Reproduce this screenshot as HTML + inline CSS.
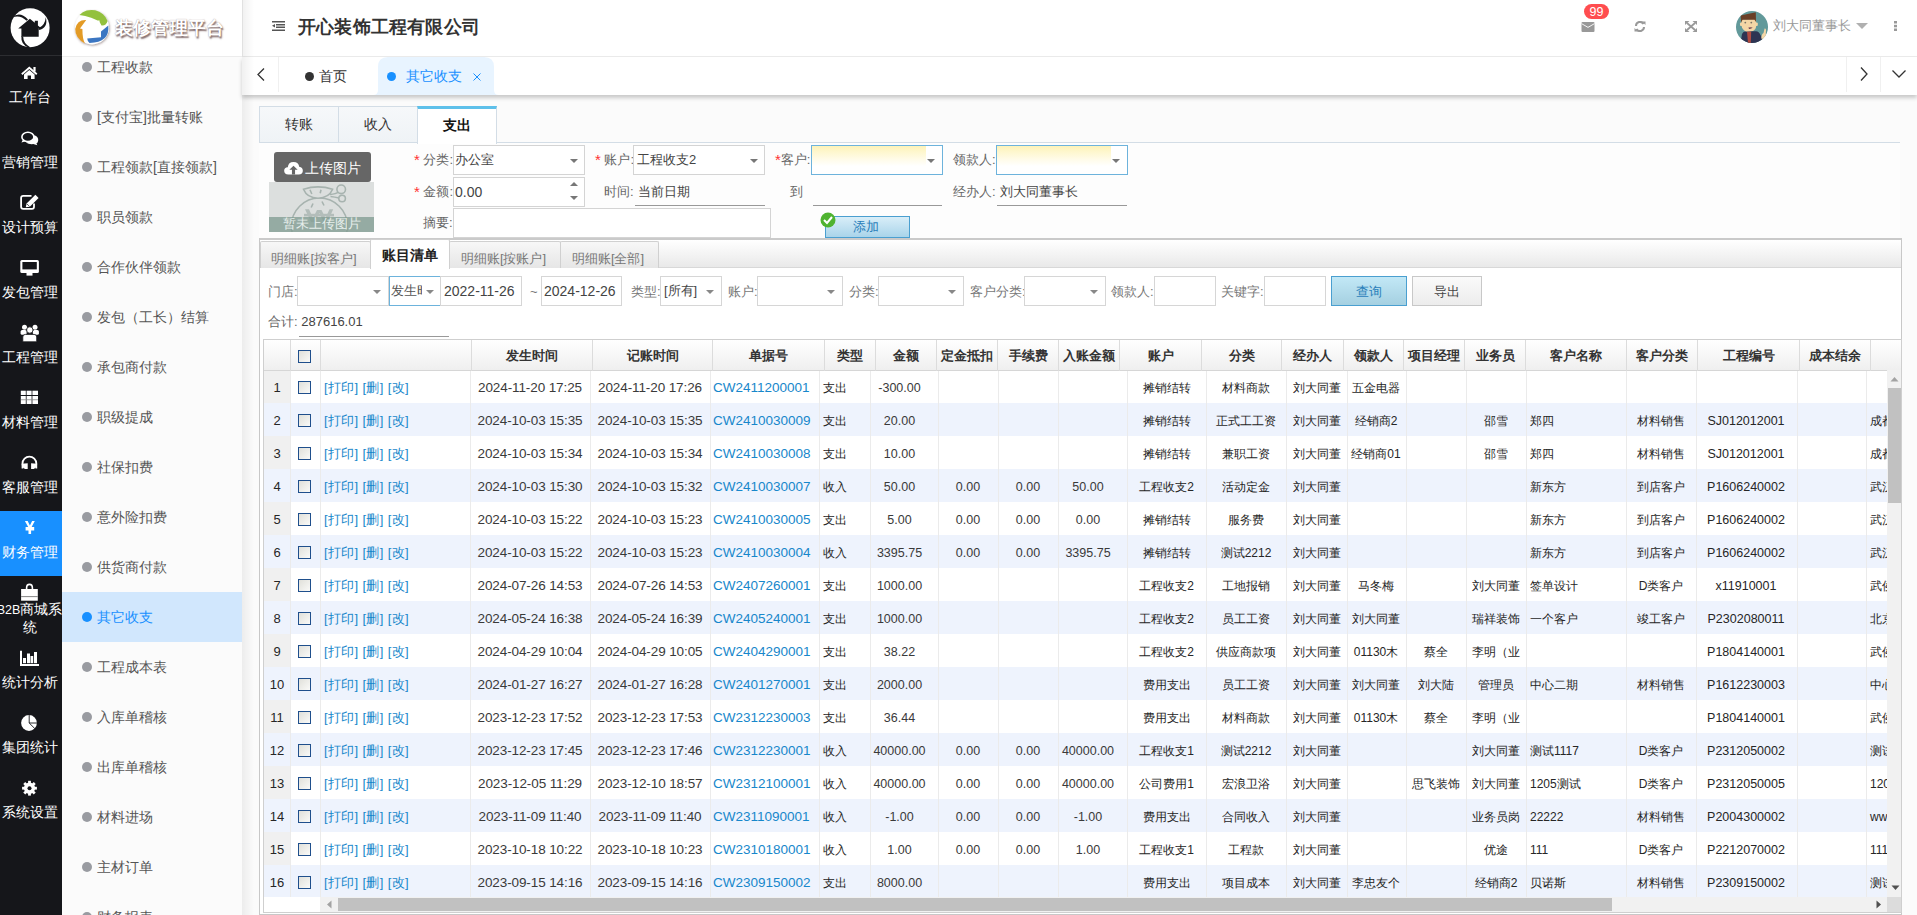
<!DOCTYPE html><html><head><meta charset="utf-8"><style>
*{box-sizing:border-box;margin:0;padding:0}
html,body{width:1917px;height:915px;overflow:hidden}
body{position:relative;font-family:"Liberation Sans",sans-serif;background:#fbfbfb;color:#333;font-size:14px}
.abs{position:absolute}
#nav{left:0;top:0;width:62px;height:915px;background:#15161a}
#nav .logo{left:0;top:0;width:62px;height:56px;border-bottom:1px solid #2c2d31}
#nav .it{left:0;width:62px;height:65px;color:#fff;text-align:center}
#nav .it.on{background:#1890ff}
#nav .it .ic{position:absolute;left:0;width:62px;top:8px;height:18px}
#nav .it .tx{position:absolute;left:-5px;width:69px;top:32px;font-size:14px;line-height:18px;white-space:nowrap;text-align:center}
#sub{left:62px;top:0;width:180px;height:915px;background:#fbfbfb;overflow:hidden}
#sub .list{position:absolute;left:0;top:56px;width:180px;height:859px;overflow:hidden}
#sub .si{position:absolute;left:0;width:180px;height:50px}
#sub .si.on{background:#d1e7fd}
#sub .si .dot{position:absolute;left:20px;top:20px;width:10px;height:10px;border-radius:50%;background:#999ba1}
#sub .si.on .dot{background:#1890ff}
#sub .si .t{position:absolute;left:35px;top:15px;font-size:14px;line-height:20px;color:#555;white-space:nowrap}
#sub .si.on .t{color:#1890ff}
#sublogo{left:62px;top:0;width:180px;height:57px;background:#fff;border-bottom:1px solid #ececec}
#header{left:242px;top:0;width:1675px;height:57px;background:#fff;border-bottom:1px solid #ececec;border-left:1px solid #eee}
#tabbar{left:242px;top:57px;width:1675px;height:38px;background:#fff;box-shadow:0 3px 4px rgba(0,0,0,.2)}
#mainshadow{left:242px;top:0;width:12px;height:915px;background:linear-gradient(to right,rgba(0,0,0,.06),rgba(0,0,0,0))}
.cjk{font-family:"Liberation Sans",sans-serif}
</style></head><body>
<div id="nav" class="abs">
<div class="logo abs"><svg width="62" height="56" viewBox="0 0 62 56"><circle cx="30.1" cy="27.7" r="19.5" fill="#fff"/><path d="M18.2 28.4 L29.9 18.8 L34.8 22.8 L34.8 20.8 L37.9 20.8 L37.9 25.4 L41.2 28.2 L38.7 28.2 L38.7 36.8 L21.4 36.8 L21.4 28.4Z" fill="#15161a"/><path d="M12 17.8 Q19.5 10.5 28 19.6 L26.6 20.8 Q19.5 14 12 17.8Z" fill="#15161a"/><path d="M45.8 17.2 Q48.5 28 38.7 30 L38.7 28 Q45 25.5 45.8 17.2Z" fill="#15161a"/><path d="M21.4 36 Q20.5 44.5 28.8 47.8 L30.5 47.4 Q23.2 43.5 23.2 36.8Z" fill="#15161a"/></svg></div>
<div class="it abs" style="top:56px"><svg width="62" height="34" viewBox="0 0 62 34" style="position:absolute;left:0;top:0"><path d="M21.2 17.4 L29.3 10.6 L37.4 17.4 L36.2 18.9 L29.3 13.1 L22.4 18.9Z" fill="#fff"/><rect x="33.4" y="11" width="2.2" height="4.6" fill="#fff"/><path d="M24 18.4 L29.3 13.9 L34.6 18.4 L34.6 23.1 L31 23.1 L31 19.6 L27.6 19.6 L27.6 23.1 L24 23.1Z" fill="#fff"/></svg><div class="tx">工作台</div></div>
<div class="it abs" style="top:121px"><svg width="62" height="34" viewBox="0 0 62 34" style="position:absolute;left:0;top:0"><path d="M34.2 14.2 Q38.6 15.6 38.2 19.4 Q37.9 21.8 36.4 22.6 L37.4 24.2 L33.2 23.1 Q29 23.6 25.8 21.4 Q33.4 21 34.2 14.2Z" fill="#fff"/><ellipse cx="27.9" cy="15.9" rx="6" ry="4.6" fill="#15161a" stroke="#fff" stroke-width="1.6"/><path d="M23 18.6 L21.4 21.6 L26 20.2Z" fill="#fff"/></svg><div class="tx">营销管理</div></div>
<div class="it abs" style="top:186px"><svg width="62" height="34" viewBox="0 0 62 34" style="position:absolute;left:0;top:0"><path d="M31.5 9.9 H23.2 Q21.1 9.9 21.1 12 V20.8 Q21.1 22.9 23.2 22.9 H32 Q34 22.9 34 20.8 V17.5" fill="none" stroke="#fff" stroke-width="1.8"/><path d="M25.8 21.2 L26.6 17.6 L35.4 8.8 L38.6 12 L29.8 20.8 Z" fill="#fff"/><path d="M26.9 17.9 L29.6 20.5" stroke="#15161a" stroke-width="0.7"/></svg><div class="tx">设计预算</div></div>
<div class="it abs" style="top:251px"><svg width="62" height="34" viewBox="0 0 62 34" style="position:absolute;left:0;top:0"><rect x="20.3" y="8.9" width="18.6" height="13.1" rx="1.5" fill="#fff"/><rect x="22.4" y="11" width="14.4" height="7.4" fill="#15161a"/><rect x="26.5" y="22" width="6" height="2.6" fill="#fff"/></svg><div class="tx">发包管理</div></div>
<div class="it abs" style="top:316px"><svg width="62" height="34" viewBox="0 0 62 34" style="position:absolute;left:0;top:0"><circle cx="24.5" cy="11.2" r="2.5" fill="#fff"/><circle cx="35" cy="11.2" r="2.5" fill="#fff"/><rect x="20.6" y="14" width="6" height="4.8" rx="1.5" fill="#fff"/><rect x="32.9" y="14" width="6" height="4.8" rx="1.5" fill="#fff"/><path d="M22.8 25.8 V21 Q22.8 18.4 25.4 18.4 H34.1 Q36.7 18.4 36.7 21 V25.8Z" fill="#fff" stroke="#15161a" stroke-width="0.8"/><circle cx="29.8" cy="14" r="3.2" fill="#fff" stroke="#15161a" stroke-width="0.8"/></svg><div class="tx">工程管理</div></div>
<div class="it abs" style="top:381px"><svg width="62" height="34" viewBox="0 0 62 34" style="position:absolute;left:0;top:0"><g fill="#fff"><rect x="20.8" y="9.7" width="5" height="4.3"/><rect x="26.6" y="9.7" width="5" height="4.3"/><rect x="32.4" y="9.7" width="5.6" height="4.3"/><rect x="20.8" y="15" width="5" height="8"/><rect x="26.6" y="15" width="5" height="8"/><rect x="32.4" y="15" width="5.6" height="8"/></g><rect x="20.8" y="18.4" width="17.2" height="0.8" fill="#888"/></svg><div class="tx">材料管理</div></div>
<div class="it abs" style="top:446px"><svg width="62" height="34" viewBox="0 0 62 34" style="position:absolute;left:0;top:0"><path d="M22.5 22.5 V17.5 A6.9 6.9 0 0 1 36.3 17.5 V22.5" fill="none" stroke="#fff" stroke-width="1.8"/><path d="M27.7 17.2 L27.7 23.1 L25 23.1 Q21.8 21.5 21.6 17.8Z M31.1 17.2 L31.1 23.1 L33.8 23.1 Q37 21.5 37.2 17.8Z" fill="#fff"/></svg><div class="tx">客服管理</div></div>
<div class="it abs on" style="top:511px"><svg width="62" height="34" viewBox="0 0 62 34" style="position:absolute;left:0;top:0"><path d="M24.9 9.9 L27.7 9.9 L29.9 14.6 L32.1 9.9 L34.8 9.9 L31.6 15.9 L34.2 15.9 L34.2 19.5 L31.1 19.5 L31.1 22.9 L28.5 22.9 L28.5 19.5 L25.6 19.5 L25.6 15.9 L28.2 15.9 Z" fill="#fff"/></svg><div class="tx">财务管理</div></div>
<div class="it abs" style="top:576px"><svg width="62" height="34" viewBox="0 0 62 34" style="position:absolute;left:0;top:0"><rect x="21.1" y="13" width="16.7" height="11.7" fill="#fff"/><rect x="21.1" y="20.2" width="16.7" height="0.9" fill="#777"/><path d="M26.6 13.6 V12 Q26.6 8.4 29.5 8.4 Q32.4 8.4 32.4 12 V13.6" fill="none" stroke="#fff" stroke-width="1.6"/></svg><div class="tx" style="top:25px;line-height:17px"><span style="font-size:12.5px">B2B</span>商城系<br>统</div></div>
<div class="it abs" style="top:641px"><svg width="62" height="34" viewBox="0 0 62 34" style="position:absolute;left:0;top:0"><path d="M21 9.7 V23.9 H39" fill="none" stroke="#fff" stroke-width="2"/><g fill="#fff"><rect x="23" y="17" width="3" height="5.2"/><rect x="27" y="12.5" width="3" height="9.7"/><rect x="30.5" y="15" width="2.7" height="7.2"/><rect x="34" y="11" width="3" height="11.2"/></g></svg><div class="tx">统计分析</div></div>
<div class="it abs" style="top:706px"><svg width="62" height="34" viewBox="0 0 62 34" style="position:absolute;left:0;top:0"><circle cx="29" cy="17" r="7.9" fill="#fff"/><path d="M29.2 8.5 V17 H37.4 M29.2 17 L35 22.8" fill="none" stroke="#15161a" stroke-width="0.9"/></svg><div class="tx">集团统计</div></div>
<div class="it abs" style="top:771px"><svg width="62" height="34" viewBox="0 0 62 34" style="position:absolute;left:0;top:0"><g transform="translate(29.5,17.2)" fill="#fff"><circle r="5.6"/><g><rect x="-1.4" y="-7.4" width="2.8" height="14.8"/><rect x="-1.4" y="-7.4" width="2.8" height="14.8" transform="rotate(45)"/><rect x="-1.4" y="-7.4" width="2.8" height="14.8" transform="rotate(90)"/><rect x="-1.4" y="-7.4" width="2.8" height="14.8" transform="rotate(135)"/></g><circle r="2" fill="#15161a"/></g></svg><div class="tx">系统设置</div></div>
</div>
<div id="sub" class="abs"><div class="list">
<div class="si" style="top:-14px"><div class="dot"></div><div class="t">工程收款</div></div>
<div class="si" style="top:36px"><div class="dot"></div><div class="t">[支付宝]批量转账</div></div>
<div class="si" style="top:86px"><div class="dot"></div><div class="t">工程领款[直接领款]</div></div>
<div class="si" style="top:136px"><div class="dot"></div><div class="t">职员领款</div></div>
<div class="si" style="top:186px"><div class="dot"></div><div class="t">合作伙伴领款</div></div>
<div class="si" style="top:236px"><div class="dot"></div><div class="t">发包（工长）结算</div></div>
<div class="si" style="top:286px"><div class="dot"></div><div class="t">承包商付款</div></div>
<div class="si" style="top:336px"><div class="dot"></div><div class="t">职级提成</div></div>
<div class="si" style="top:386px"><div class="dot"></div><div class="t">社保扣费</div></div>
<div class="si" style="top:436px"><div class="dot"></div><div class="t">意外险扣费</div></div>
<div class="si" style="top:486px"><div class="dot"></div><div class="t">供货商付款</div></div>
<div class="si on" style="top:536px"><div class="dot"></div><div class="t">其它收支</div></div>
<div class="si" style="top:586px"><div class="dot"></div><div class="t">工程成本表</div></div>
<div class="si" style="top:636px"><div class="dot"></div><div class="t">入库单稽核</div></div>
<div class="si" style="top:686px"><div class="dot"></div><div class="t">出库单稽核</div></div>
<div class="si" style="top:736px"><div class="dot"></div><div class="t">材料进场</div></div>
<div class="si" style="top:786px"><div class="dot"></div><div class="t">主材订单</div></div>
<div class="si" style="top:836px"><div class="dot"></div><div class="t">财务报表</div></div>
</div></div>
<div id="sublogo" class="abs"><svg class="abs" style="left:8px;top:5px" width="45" height="45" viewBox="0 0 45 45" style="overflow:visible"><defs><filter id="sh" x="-20%" y="-20%" width="140%" height="140%"><feDropShadow dx="0.6" dy="1" stdDeviation="0.9" flood-color="#5a4040" flood-opacity="0.55"/></filter></defs><g filter="url(#sh)"><circle cx="22" cy="22.4" r="17" fill="#fff"/><path d="M9.5 10 A17 17 0 0 1 37.6 16 Q36 21 31.5 20.5 L29.6 17 L29.6 15.4 L27.6 15.4 L21.2 12.8 Q15 10.5 9.5 10Z" fill="#93c13e"/><path d="M16.2 15 Q7 14.5 5.2 24 Q5 33 15 38.6 Q12.4 34 12.4 24 L10 23.4 Z" fill="#e39b27"/><path d="M38.3 20.5 Q40 37.5 19.5 38 Q17.6 37 17.2 33.4 L31 32.2 L31 26.6 Z" fill="#3b76c2"/></g></svg><div class="abs" style="left:53px;top:17px;font-size:18px;line-height:22px;font-weight:bold;color:#fff;letter-spacing:0.2px;text-shadow:1px 1.5px 1.5px rgba(90,60,60,.75),0 0 1px rgba(90,60,60,.6);white-space:nowrap">装修管理平台</div></div>
<div id="header" class="abs">
<svg class="abs" style="left:29px;top:21px" width="13" height="10" viewBox="0 0 13 10"><g fill="#555"><rect x="0" y="0" width="13" height="1.5"/><rect x="4" y="3" width="9" height="1.5"/><rect x="4" y="5.5" width="9" height="1.5"/><rect x="0" y="8.5" width="13" height="1.5"/><path d="M0 4.7 L3 3 L3 6.5Z"/></g></svg>
<div class="abs" style="left:55px;top:16px;font-size:18px;line-height:22px;font-weight:bold;color:#333;letter-spacing:0.2px;white-space:nowrap">开心装饰工程有限公司</div>
<svg class="abs" style="left:1338px;top:22px" width="14" height="10" viewBox="0 0 14 10"><rect x="0.5" y="0" width="13" height="10" rx="1" fill="#999"/><path d="M0.5 1.6 L7 5.4 L13.5 1.6" fill="none" stroke="#fff" stroke-width="0.9"/></svg>
<div class="abs" style="left:1341px;top:4px;width:25px;height:15px;border-radius:8px;background:#ff4d4f;color:#fff;font-size:12.5px;line-height:16px;text-align:center">99</div>
<svg class="abs" style="left:1391px;top:21px" width="12" height="11" viewBox="0 0 12 11"><path d="M2 5 A4 4 0 0 1 9.5 3" fill="none" stroke="#999" stroke-width="2"/><path d="M8 0.5 L11.5 0.5 L11.5 4 Z" fill="#999"/><path d="M10 6 A4 4 0 0 1 2.5 8" fill="none" stroke="#999" stroke-width="2"/><path d="M4 10.5 L0.5 10.5 L0.5 7Z" fill="#999"/></svg>
<svg class="abs" style="left:1442px;top:21px" width="12" height="11" viewBox="0 0 12 11"><path d="M2 2 L10 9 M10 2 L2 9" stroke="#999" stroke-width="1.8"/><path d="M0 0 H4.5 L0 4Z M12 0 H7.5 L12 4Z M0 11 H4.5 L0 7Z M12 11 H7.5 L12 7Z" fill="#999"/></svg>
<svg class="abs" style="left:1493px;top:11px" width="32" height="32" viewBox="0 0 32 32"><defs><clipPath id="av"><circle cx="16" cy="16" r="16"/></clipPath></defs><g clip-path="url(#av)"><rect width="32" height="32" fill="#62999a"/><path d="M4.5 32 L6 23 Q7 20.5 10 20.3 L20 20.3 Q23 20.5 24.5 24 L26.5 27.5 L28 32Z" fill="#2e3452"/><path d="M11 20.4 L15.2 20.4 L14.8 32 L12 32Z" fill="#b14b40"/><path d="M5.3 8.5 L20 8 L20.3 14.5 Q20 18.5 17 20 L10 20.5 Q6 18.5 5.5 14.5Z" fill="#f5d6a6"/><rect x="4" y="11.5" width="2.5" height="3.5" rx="1" fill="#f5d6a6"/><rect x="19.5" y="11.5" width="2.3" height="3.5" rx="1" fill="#f5d6a6"/><path d="M4.6 4.4 L19.8 1.2 L20 11 L18.5 8.7 L6.5 8.8 L5.2 11.5Z" fill="#6a3f27"/><circle cx="9.3" cy="11.6" r="0.9" fill="#7b7466"/><circle cx="15.3" cy="11.6" r="0.9" fill="#7b7466"/><path d="M12.4 16.5 Q14.5 15.8 16.6 16.6 Q15.5 18.2 13 18Z" fill="#7a4b58"/><path d="M25.2 27.5 Q25.5 23 27.5 22 L28.6 17.5 Q30 17 30 19 L29.8 23 Q31 25.5 29 28.5Z" fill="#f5d6a6"/></g></svg>
<div class="abs" style="left:1530px;top:17px;font-size:13px;line-height:18px;color:#999;white-space:nowrap">刘大同董事长</div>
<svg class="abs" style="left:1613px;top:23px" width="12" height="6" viewBox="0 0 12 6"><path d="M0 0 H12 L6 6Z" fill="#b0b0b0"/></svg>
<svg class="abs" style="left:1651px;top:21px" width="3" height="10" viewBox="0 0 3 10"><g fill="#999"><rect y="0" width="3" height="2.5"/><rect y="3.8" width="3" height="2.5"/><rect y="7.5" width="3" height="2.5"/></g></svg>
</div>
<div id="tabbar" class="abs">
<div class="abs" style="left:0;top:0;width:37px;height:35px;border-right:1px solid #f0f0f0"></div>
<svg class="abs" style="left:15px;top:11px" width="8" height="13" viewBox="0 0 8 13"><path d="M7 0.5 L1 6.5 L7 12.5" fill="none" stroke="#333" stroke-width="1.3"/></svg>
<div class="abs" style="left:63px;top:15px;width:9px;height:9px;border-radius:50%;background:#333"></div>
<div class="abs" style="left:77px;top:9px;font-size:14px;line-height:20px;color:#333;white-space:nowrap">首页</div>
<svg class="abs" style="left:131px;top:0px" width="126" height="38" viewBox="0 0 126 38"><path d="M0 38 Q5 38 5 33 L5 10 Q5 0 15 0 L111 0 Q121 0 121 10 L121 33 Q121 38 126 38Z" fill="#e8f4ff"/></svg>
<div class="abs" style="left:145px;top:15px;width:9px;height:9px;border-radius:50%;background:#1890ff"></div>
<div class="abs" style="left:164px;top:9px;font-size:14px;line-height:20px;color:#1890ff;white-space:nowrap">其它收支</div>
<svg class="abs" style="left:231px;top:16px" width="8" height="8" viewBox="0 0 8 8"><path d="M0.5 0.5 L7.5 7.5 M7.5 0.5 L0.5 7.5" stroke="#1890ff" stroke-width="1"/></svg>
<div class="abs" style="left:1604px;top:0;width:1px;height:35px;background:#f0f0f0"></div>
<div class="abs" style="left:1638px;top:0;width:1px;height:35px;background:#f0f0f0"></div>
<svg class="abs" style="left:1618px;top:10px" width="8" height="14" viewBox="0 0 8 14"><path d="M1 0.5 L7 7 L1 13.5" fill="none" stroke="#333" stroke-width="1.3"/></svg>
<svg class="abs" style="left:1650px;top:13px" width="14" height="8" viewBox="0 0 14 8"><path d="M0.5 0.5 L7 7 L13.5 0.5" fill="none" stroke="#333" stroke-width="1.3"/></svg>
</div>
<div id="mainshadow" class="abs"></div>
<style>
.t1{position:absolute;top:106px;height:36px;background:linear-gradient(#f6f8fa,#eff3f6);border:1px solid #d3dde6;border-bottom:none;font-size:14px;line-height:35px;text-align:center;color:#333}
.t1.on{background:#fff;border-top:3px solid #5ec0ea;line-height:33px;font-weight:bold;color:#111;height:38px}
.lbl{position:absolute;font-size:13px;line-height:18px;color:#666;white-space:nowrap}
.red{color:#f33;font-size:15px;line-height:1px;position:relative;top:1px}
.inp{position:absolute;background:#fff;border:1px solid #d4d4d4}
.car{position:absolute;width:0;height:0;border-left:4px solid transparent;border-right:4px solid transparent;border-top:4px solid #777;margin-left:1px;margin-top:1px}
.uline{position:absolute;height:1px;background:#999}
.val{position:absolute;font-size:13px;line-height:18px;color:#444;white-space:nowrap}
.t2{position:absolute;top:241px;height:27px;background:linear-gradient(#f7f7f7,#e6e6e6);border:1px solid #d0d0d0;border-bottom:none;border-radius:2px 2px 0 0;font-size:13px;line-height:34px;text-align:center;color:#777;white-space:nowrap;padding-right:3px}
.t2.on{top:239px;height:30px;background:#fff;color:#222;font-size:14px;line-height:30px;font-weight:bold;padding-right:0}
.fl{position:absolute;top:284px;font-size:13px;line-height:16px;color:#777;white-space:nowrap}
.fi{position:absolute;top:276px;height:30px;background:#fff;border:1px solid #d6d6d6}
.fv{position:absolute;font-size:14px;line-height:18px;color:#444;white-space:nowrap}
.btn{position:absolute;top:276px;height:30px;border:1px solid #c8c8c8;background:linear-gradient(#fafafa,#ececec);font-size:13px;line-height:30px;text-align:center;color:#444}
</style>
<div class="abs" style="left:259px;top:142px;width:1641px;height:1px;background:#d3dde6"></div>
<div class="abs" style="left:259px;top:143px;width:1641px;height:95px;background:#fdfdfd"></div>
<div class="t1" style="left:259px;width:80px">转账</div>
<div class="t1" style="left:338px;width:80px">收入</div>
<div class="t1 on" style="left:417px;width:80px">支出</div>
<div class="abs" style="left:274px;top:152px;width:97px;height:30px;background:#666;border-radius:3px"></div>
<svg class="abs" style="left:284px;top:160.5px" width="19" height="14" viewBox="0 0 18 13.5"><path d="M4 13 Q0 13 0 9.5 Q0 6 3.5 6 Q4 1 9 1 Q14 1 14.5 5.5 Q18 6 18 9.5 Q18 13 14 13Z" fill="#fff"/><path d="M9 4.5 L13 8.5 L10.5 8.5 L10.5 13 L7.5 13 L7.5 8.5 L5 8.5Z" fill="#666"/></svg>
<div class="abs" style="left:305px;top:158px;font-size:14px;line-height:20px;color:#fff;white-space:nowrap">上传图片</div>
<div class="abs" style="left:269px;top:182px;width:105px;height:50px;background:#dcdfde;overflow:hidden"><svg class="abs" style="left:0;top:0" width="105" height="50" viewBox="0 0 105 50"><g fill="none" stroke="#a7b3af" stroke-width="1.6"><circle cx="50.4" cy="44" r="28"/><path d="M34.5 7.3 Q49 2.5 63.6 7.3 Q60 16 49 16.2 Q38 16 34.5 7.3Z" fill="#dcdfde"/><path d="M41 7.8 L42.8 12 M52 7.8 L51.2 11.2 M44 21.5 L42.2 25.5 M53 19.5 L55 23.5"/><circle cx="72.2" cy="7.3" r="4.3"/><circle cx="73.1" cy="16.5" r="3.3"/><path d="M61 12.5 Q67 12 69.5 10 M61.5 14.5 Q66 15 69.8 16"/></g><path d="M36 27.2 L40 27.2 L44 36 L48 28 L52.5 28 L56.5 36 L60.5 27.2 L64.2 27.2 L58.5 40 L54.5 40 L50.3 31 L46 40 L42 40Z" fill="#b3bdba"/><rect x="35" y="31.8" width="30" height="2.6" fill="#b3bdba"/></svg><div class="abs" style="left:0;top:35px;width:105px;height:15px;background:rgba(131,157,148,.8);color:#e6eeeb;font-size:12.5px;line-height:15px;text-align:center">暂未上传图片</div></div>
<div class="lbl" style="left:414px;top:151px"><span class="red">*</span> 分类:</div>
<div class="inp" style="left:453px;top:145px;width:132px;height:30px"></div>
<div class="val" style="left:455px;top:151px">办公室</div>
<div class="car" style="left:569px;top:158px"></div>
<div class="lbl" style="left:595px;top:151px"><span class="red">*</span> 账户:</div>
<div class="inp" style="left:633px;top:145px;width:132px;height:30px"></div>
<div class="val" style="left:637px;top:151px">工程收支2</div>
<div class="car" style="left:749px;top:158px"></div>
<div class="lbl" style="left:775px;top:151px"><span class="red">*</span>客户:</div>
<div class="inp" style="left:811px;top:145px;width:132px;height:30px;border-color:#6db3dc;background:linear-gradient(to right,rgba(255,255,255,0) 0,rgba(255,255,255,0) 88%,#fff 88%),linear-gradient(#fdf3b9 0%,#fffbe6 45%,#fff 72%)"></div>
<div class="car" style="left:926px;top:158px"></div>
<div class="lbl" style="left:953px;top:151px">领款人:</div>
<div class="inp" style="left:996px;top:145px;width:132px;height:30px;border-color:#6db3dc;background:linear-gradient(to right,rgba(255,255,255,0) 0,rgba(255,255,255,0) 88%,#fff 88%),linear-gradient(#fdf3b9 0%,#fffbe6 45%,#fff 72%)"></div>
<div class="car" style="left:1111px;top:158px"></div>
<div class="lbl" style="left:414px;top:183px"><span class="red">*</span> 金额:</div>
<div class="inp" style="left:453px;top:177px;width:132px;height:30px"></div>
<div class="val" style="left:455px;top:183px;font-size:14px">0.00</div>
<svg class="abs" style="left:569px;top:180px" width="10" height="22" viewBox="0 0 10 22"><path d="M1 6 L5 2 L9 6Z M1 16 L5 20 L9 16Z" fill="#777"/></svg>
<div class="lbl" style="left:604px;top:183px">时间:</div>
<div class="val" style="left:638px;top:183px">当前日期</div>
<div class="uline" style="left:635px;top:205px;width:130px"></div>
<div class="lbl" style="left:790px;top:183px">到</div>
<div class="uline" style="left:813px;top:205px;width:129px"></div>
<div class="lbl" style="left:953px;top:183px">经办人:</div>
<div class="val" style="left:1000px;top:183px">刘大同董事长</div>
<div class="uline" style="left:997px;top:205px;width:130px"></div>
<div class="lbl" style="left:423px;top:214px">摘要:</div>
<div class="inp" style="left:453px;top:208px;width:318px;height:30px"></div>
<div class="abs" style="left:825px;top:216px;width:85px;height:22px;border:1px solid #4a9fd0;background:linear-gradient(#d9eef8,#a9d4ea);color:#2a80ba;font-size:12.5px;line-height:20px;text-align:center;padding-right:4px">添加</div>
<svg class="abs" style="left:820px;top:212px" width="16" height="16" viewBox="0 0 16 16"><circle cx="8" cy="8" r="7.5" fill="#4fb330"/><path d="M4 8 L7 11 L12 5" fill="none" stroke="#fff" stroke-width="2"/></svg>
<div class="abs" style="left:259px;top:238px;width:1643px;height:677px;background:#fff;border:1px solid #c8c8c8;border-top:2px solid #cacaca"></div>
<div class="abs" style="left:260px;top:240px;width:1641px;height:28px;background:linear-gradient(#fff,#e9e9e9);border-bottom:1px solid #d8d8d8"></div>
<div class="t2" style="left:260px;width:111px">明细账[按客户]</div>
<div class="t2 on" style="left:370px;width:80px">账目清单</div>
<div class="t2" style="left:449px;width:112px">明细账[按账户]</div>
<div class="t2" style="left:560px;width:99px">明细账[全部]</div>
<div class="fl" style="left:268px">门店:</div>
<div class="fi" style="left:297px;width:92px;border-color:#d6d6d6"></div>
<div class="car" style="left:372px;top:289px;border-top-color:#888"></div>
<div class="fi" style="left:389px;width:52px;border-color:#6db3dc"></div>
<div class="fv" style="left:391px;top:282px;width:31px;overflow:hidden;font-size:13px;color:#555">发生时间</div>
<div class="car" style="left:425px;top:289px;border-top-color:#888"></div>
<div class="fi" style="left:440px;width:82px"></div>
<div class="fv" style="left:444px;top:282px">2022-11-26</div>
<div class="fl" style="left:530px">~</div>
<div class="fi" style="left:541px;width:81px"></div>
<div class="fv" style="left:544px;top:282px">2024-12-26</div>
<div class="fl" style="left:631px">类型:</div>
<div class="fi" style="left:660px;width:62px;border-color:#d6d6d6"></div>
<div class="car" style="left:705px;top:289px;border-top-color:#888"></div>
<div class="fv" style="left:664px;top:282px;font-size:13px">[所有]</div>
<div class="fl" style="left:728px">账户:</div>
<div class="fi" style="left:757px;width:86px;border-color:#d6d6d6"></div>
<div class="car" style="left:826px;top:289px;border-top-color:#888"></div>
<div class="fl" style="left:849px">分类:</div>
<div class="fi" style="left:878px;width:86px;border-color:#d6d6d6"></div>
<div class="car" style="left:947px;top:289px;border-top-color:#888"></div>
<div class="fl" style="left:970px">客户分类:</div>
<div class="fi" style="left:1024px;width:82px;border-color:#d6d6d6"></div>
<div class="car" style="left:1089px;top:289px;border-top-color:#888"></div>
<div class="fl" style="left:1111px">领款人:</div>
<div class="fi" style="left:1154px;width:62px"></div>
<div class="fl" style="left:1221px">关键字:</div>
<div class="fi" style="left:1264px;width:62px"></div>
<div class="btn" style="left:1331px;width:76px;border-color:#4a9fd0;background:linear-gradient(#c2e8f6,#a5d0e1);color:#2a80ba">查询</div>
<div class="btn" style="left:1412px;width:70px">导出</div>
<div class="fl" style="left:268px;top:314px;font-size:13px;color:#666">合计: <span style="color:#444">287616.01</span></div>
<div class="uline" style="left:299px;top:336px;width:150px;background:#999"></div>
<style>
.dg{position:absolute;left:263px;top:339px;width:1639px;height:574px;border:1px solid #cfcfcf;background:#fff;overflow:hidden}
.hd{position:absolute;left:0;top:0;width:1637px;height:31px;background:linear-gradient(#fff,#efefef);border-bottom:1px solid #d6d6d6}
.hb{position:absolute;top:0;width:1px;height:31px;background:#dcdcdc}
.ht{position:absolute;top:7px;font-size:13px;line-height:17px;font-weight:bold;color:#333;white-space:nowrap;text-align:center}
.rw{position:absolute;left:0;width:1637px;height:33px}
.rw.alt{background:#eef3fd}
.rn{position:absolute;left:0;width:26px;height:33px;background:#f0f0f0}
.alt .rn{background:#eef3fd}
.bb{position:absolute;top:31px;width:1px;height:527px;background:#ebebeb}
.c{position:absolute;font-size:12px;line-height:16px;color:#262626;white-space:nowrap;text-align:center}
.lk{color:#1787cb}
.cb{position:absolute;width:13px;height:13px;border:2px solid #1f4f8c;background:linear-gradient(135deg,#e0e0da,#fafaf8);border-width:1.5px}
</style>
<div class="dg">
<div class="rw" style="top:30px"><div class="rn"></div></div>
<div class="rw alt" style="top:63px"><div class="rn"></div></div>
<div class="rw" style="top:96px"><div class="rn"></div></div>
<div class="rw alt" style="top:129px"><div class="rn"></div></div>
<div class="rw" style="top:162px"><div class="rn"></div></div>
<div class="rw alt" style="top:195px"><div class="rn"></div></div>
<div class="rw" style="top:228px"><div class="rn"></div></div>
<div class="rw alt" style="top:261px"><div class="rn"></div></div>
<div class="rw" style="top:294px"><div class="rn"></div></div>
<div class="rw alt" style="top:327px"><div class="rn"></div></div>
<div class="rw" style="top:360px"><div class="rn"></div></div>
<div class="rw alt" style="top:393px"><div class="rn"></div></div>
<div class="rw" style="top:426px"><div class="rn"></div></div>
<div class="rw alt" style="top:459px"><div class="rn"></div></div>
<div class="rw" style="top:492px"><div class="rn"></div></div>
<div class="rw alt" style="top:525px"><div class="rn"></div></div>
<div class="bb" style="left:26px"></div>
<div class="bb" style="left:56px"></div>
<div class="bb" style="left:206px"></div>
<div class="bb" style="left:326px"></div>
<div class="bb" style="left:446px"></div>
<div class="bb" style="left:555px"></div>
<div class="bb" style="left:606px"></div>
<div class="bb" style="left:674px"></div>
<div class="bb" style="left:734px"></div>
<div class="bb" style="left:794px"></div>
<div class="bb" style="left:863px"></div>
<div class="bb" style="left:942px"></div>
<div class="bb" style="left:1022px"></div>
<div class="bb" style="left:1083px"></div>
<div class="bb" style="left:1142px"></div>
<div class="bb" style="left:1202px"></div>
<div class="bb" style="left:1262px"></div>
<div class="bb" style="left:1362px"></div>
<div class="bb" style="left:1432px"></div>
<div class="bb" style="left:1533px"></div>
<div class="bb" style="left:1602px"></div>
<div class="c" style="left:-87.0px;top:40px;width:200px;font-size:13px">1</div>
<div class="cb" style="left:34px;top:41px"></div>
<div class="c lk" style="left:60px;top:40px;text-align:left;font-size:13px;letter-spacing:0.33px">[打印] [删] [改]</div>
<div class="c" style="left:166.0px;top:40px;width:200px;font-size:13.5px;letter-spacing:-0.1px;color:#3a3a3a">2024-11-20 17:25</div>
<div class="c" style="left:286.0px;top:40px;width:200px;font-size:13.5px;letter-spacing:-0.1px;color:#3a3a3a">2024-11-20 17:26</div>
<div class="c" style="left:449px;top:40px;text-align:left;font-size:13.5px;color:#1787cb">CW2411200001</div>
<div class="c" style="left:559px;top:40px;text-align:left;">支出</div>
<div class="c" style="left:535.5px;top:40px;width:200px;font-size:12.5px;color:#3a3a3a">-300.00</div>
<div class="c" style="left:802.5px;top:40px;width:200px;">摊销结转</div>
<div class="c" style="left:882.0px;top:40px;width:200px;">材料商款</div>
<div class="c" style="left:952.5px;top:40px;width:200px;">刘大同董</div>
<div class="c" style="left:1012.0px;top:40px;width:200px;">五金电器</div>
<div class="c" style="left:-87.0px;top:73px;width:200px;font-size:13px">2</div>
<div class="cb" style="left:34px;top:74px"></div>
<div class="c lk" style="left:60px;top:73px;text-align:left;font-size:13px;letter-spacing:0.33px">[打印] [删] [改]</div>
<div class="c" style="left:166.0px;top:73px;width:200px;font-size:13.5px;letter-spacing:-0.1px;color:#3a3a3a">2024-10-03 15:35</div>
<div class="c" style="left:286.0px;top:73px;width:200px;font-size:13.5px;letter-spacing:-0.1px;color:#3a3a3a">2024-10-03 15:35</div>
<div class="c" style="left:449px;top:73px;text-align:left;font-size:13.5px;color:#1787cb">CW2410030009</div>
<div class="c" style="left:559px;top:73px;text-align:left;">支出</div>
<div class="c" style="left:535.5px;top:73px;width:200px;font-size:12.5px;color:#3a3a3a">20.00</div>
<div class="c" style="left:802.5px;top:73px;width:200px;">摊销结转</div>
<div class="c" style="left:882.0px;top:73px;width:200px;">正式工工资</div>
<div class="c" style="left:952.5px;top:73px;width:200px;">刘大同董</div>
<div class="c" style="left:1012.0px;top:73px;width:200px;">经销商2</div>
<div class="c" style="left:1132.0px;top:73px;width:200px;">邵雪</div>
<div class="c" style="left:1266px;top:73px;text-align:left;">郑四</div>
<div class="c" style="left:1297.0px;top:73px;width:200px;">材料销售</div>
<div class="c" style="left:1382.0px;top:73px;width:200px;font-size:12.5px">SJ012012001</div>
<div class="c" style="left:1606px;top:73px;text-align:left;">成都</div>
<div class="c" style="left:-87.0px;top:106px;width:200px;font-size:13px">3</div>
<div class="cb" style="left:34px;top:107px"></div>
<div class="c lk" style="left:60px;top:106px;text-align:left;font-size:13px;letter-spacing:0.33px">[打印] [删] [改]</div>
<div class="c" style="left:166.0px;top:106px;width:200px;font-size:13.5px;letter-spacing:-0.1px;color:#3a3a3a">2024-10-03 15:34</div>
<div class="c" style="left:286.0px;top:106px;width:200px;font-size:13.5px;letter-spacing:-0.1px;color:#3a3a3a">2024-10-03 15:34</div>
<div class="c" style="left:449px;top:106px;text-align:left;font-size:13.5px;color:#1787cb">CW2410030008</div>
<div class="c" style="left:559px;top:106px;text-align:left;">支出</div>
<div class="c" style="left:535.5px;top:106px;width:200px;font-size:12.5px;color:#3a3a3a">10.00</div>
<div class="c" style="left:802.5px;top:106px;width:200px;">摊销结转</div>
<div class="c" style="left:882.0px;top:106px;width:200px;">兼职工资</div>
<div class="c" style="left:952.5px;top:106px;width:200px;">刘大同董</div>
<div class="c" style="left:1012.0px;top:106px;width:200px;">经销商01</div>
<div class="c" style="left:1132.0px;top:106px;width:200px;">邵雪</div>
<div class="c" style="left:1266px;top:106px;text-align:left;">郑四</div>
<div class="c" style="left:1297.0px;top:106px;width:200px;">材料销售</div>
<div class="c" style="left:1382.0px;top:106px;width:200px;font-size:12.5px">SJ012012001</div>
<div class="c" style="left:1606px;top:106px;text-align:left;">成都</div>
<div class="c" style="left:-87.0px;top:139px;width:200px;font-size:13px">4</div>
<div class="cb" style="left:34px;top:140px"></div>
<div class="c lk" style="left:60px;top:139px;text-align:left;font-size:13px;letter-spacing:0.33px">[打印] [删] [改]</div>
<div class="c" style="left:166.0px;top:139px;width:200px;font-size:13.5px;letter-spacing:-0.1px;color:#3a3a3a">2024-10-03 15:30</div>
<div class="c" style="left:286.0px;top:139px;width:200px;font-size:13.5px;letter-spacing:-0.1px;color:#3a3a3a">2024-10-03 15:32</div>
<div class="c" style="left:449px;top:139px;text-align:left;font-size:13.5px;color:#1787cb">CW2410030007</div>
<div class="c" style="left:559px;top:139px;text-align:left;">收入</div>
<div class="c" style="left:535.5px;top:139px;width:200px;font-size:12.5px;color:#3a3a3a">50.00</div>
<div class="c" style="left:604.0px;top:139px;width:200px;font-size:12.5px;color:#3a3a3a">0.00</div>
<div class="c" style="left:664.0px;top:139px;width:200px;font-size:12.5px;color:#3a3a3a">0.00</div>
<div class="c" style="left:724.0px;top:139px;width:200px;font-size:12.5px;color:#3a3a3a">50.00</div>
<div class="c" style="left:802.5px;top:139px;width:200px;">工程收支2</div>
<div class="c" style="left:882.0px;top:139px;width:200px;">活动定金</div>
<div class="c" style="left:952.5px;top:139px;width:200px;">刘大同董</div>
<div class="c" style="left:1266px;top:139px;text-align:left;">新东方</div>
<div class="c" style="left:1297.0px;top:139px;width:200px;">到店客户</div>
<div class="c" style="left:1382.0px;top:139px;width:200px;font-size:12.5px">P1606240002</div>
<div class="c" style="left:1606px;top:139px;text-align:left;">武汉</div>
<div class="c" style="left:-87.0px;top:172px;width:200px;font-size:13px">5</div>
<div class="cb" style="left:34px;top:173px"></div>
<div class="c lk" style="left:60px;top:172px;text-align:left;font-size:13px;letter-spacing:0.33px">[打印] [删] [改]</div>
<div class="c" style="left:166.0px;top:172px;width:200px;font-size:13.5px;letter-spacing:-0.1px;color:#3a3a3a">2024-10-03 15:22</div>
<div class="c" style="left:286.0px;top:172px;width:200px;font-size:13.5px;letter-spacing:-0.1px;color:#3a3a3a">2024-10-03 15:23</div>
<div class="c" style="left:449px;top:172px;text-align:left;font-size:13.5px;color:#1787cb">CW2410030005</div>
<div class="c" style="left:559px;top:172px;text-align:left;">支出</div>
<div class="c" style="left:535.5px;top:172px;width:200px;font-size:12.5px;color:#3a3a3a">5.00</div>
<div class="c" style="left:604.0px;top:172px;width:200px;font-size:12.5px;color:#3a3a3a">0.00</div>
<div class="c" style="left:664.0px;top:172px;width:200px;font-size:12.5px;color:#3a3a3a">0.00</div>
<div class="c" style="left:724.0px;top:172px;width:200px;font-size:12.5px;color:#3a3a3a">0.00</div>
<div class="c" style="left:802.5px;top:172px;width:200px;">摊销结转</div>
<div class="c" style="left:882.0px;top:172px;width:200px;">服务费</div>
<div class="c" style="left:952.5px;top:172px;width:200px;">刘大同董</div>
<div class="c" style="left:1266px;top:172px;text-align:left;">新东方</div>
<div class="c" style="left:1297.0px;top:172px;width:200px;">到店客户</div>
<div class="c" style="left:1382.0px;top:172px;width:200px;font-size:12.5px">P1606240002</div>
<div class="c" style="left:1606px;top:172px;text-align:left;">武汉</div>
<div class="c" style="left:-87.0px;top:205px;width:200px;font-size:13px">6</div>
<div class="cb" style="left:34px;top:206px"></div>
<div class="c lk" style="left:60px;top:205px;text-align:left;font-size:13px;letter-spacing:0.33px">[打印] [删] [改]</div>
<div class="c" style="left:166.0px;top:205px;width:200px;font-size:13.5px;letter-spacing:-0.1px;color:#3a3a3a">2024-10-03 15:22</div>
<div class="c" style="left:286.0px;top:205px;width:200px;font-size:13.5px;letter-spacing:-0.1px;color:#3a3a3a">2024-10-03 15:23</div>
<div class="c" style="left:449px;top:205px;text-align:left;font-size:13.5px;color:#1787cb">CW2410030004</div>
<div class="c" style="left:559px;top:205px;text-align:left;">收入</div>
<div class="c" style="left:535.5px;top:205px;width:200px;font-size:12.5px;color:#3a3a3a">3395.75</div>
<div class="c" style="left:604.0px;top:205px;width:200px;font-size:12.5px;color:#3a3a3a">0.00</div>
<div class="c" style="left:664.0px;top:205px;width:200px;font-size:12.5px;color:#3a3a3a">0.00</div>
<div class="c" style="left:724.0px;top:205px;width:200px;font-size:12.5px;color:#3a3a3a">3395.75</div>
<div class="c" style="left:802.5px;top:205px;width:200px;">摊销结转</div>
<div class="c" style="left:882.0px;top:205px;width:200px;">测试2212</div>
<div class="c" style="left:952.5px;top:205px;width:200px;">刘大同董</div>
<div class="c" style="left:1266px;top:205px;text-align:left;">新东方</div>
<div class="c" style="left:1297.0px;top:205px;width:200px;">到店客户</div>
<div class="c" style="left:1382.0px;top:205px;width:200px;font-size:12.5px">P1606240002</div>
<div class="c" style="left:1606px;top:205px;text-align:left;">武汉</div>
<div class="c" style="left:-87.0px;top:238px;width:200px;font-size:13px">7</div>
<div class="cb" style="left:34px;top:239px"></div>
<div class="c lk" style="left:60px;top:238px;text-align:left;font-size:13px;letter-spacing:0.33px">[打印] [删] [改]</div>
<div class="c" style="left:166.0px;top:238px;width:200px;font-size:13.5px;letter-spacing:-0.1px;color:#3a3a3a">2024-07-26 14:53</div>
<div class="c" style="left:286.0px;top:238px;width:200px;font-size:13.5px;letter-spacing:-0.1px;color:#3a3a3a">2024-07-26 14:53</div>
<div class="c" style="left:449px;top:238px;text-align:left;font-size:13.5px;color:#1787cb">CW2407260001</div>
<div class="c" style="left:559px;top:238px;text-align:left;">支出</div>
<div class="c" style="left:535.5px;top:238px;width:200px;font-size:12.5px;color:#3a3a3a">1000.00</div>
<div class="c" style="left:802.5px;top:238px;width:200px;">工程收支2</div>
<div class="c" style="left:882.0px;top:238px;width:200px;">工地报销</div>
<div class="c" style="left:952.5px;top:238px;width:200px;">刘大同董</div>
<div class="c" style="left:1012.0px;top:238px;width:200px;">马冬梅</div>
<div class="c" style="left:1132.0px;top:238px;width:200px;">刘大同董</div>
<div class="c" style="left:1266px;top:238px;text-align:left;">签单设计</div>
<div class="c" style="left:1297.0px;top:238px;width:200px;">D类客户</div>
<div class="c" style="left:1382.0px;top:238px;width:200px;font-size:12.5px">x11910001</div>
<div class="c" style="left:1606px;top:238px;text-align:left;">武侯</div>
<div class="c" style="left:-87.0px;top:271px;width:200px;font-size:13px">8</div>
<div class="cb" style="left:34px;top:272px"></div>
<div class="c lk" style="left:60px;top:271px;text-align:left;font-size:13px;letter-spacing:0.33px">[打印] [删] [改]</div>
<div class="c" style="left:166.0px;top:271px;width:200px;font-size:13.5px;letter-spacing:-0.1px;color:#3a3a3a">2024-05-24 16:38</div>
<div class="c" style="left:286.0px;top:271px;width:200px;font-size:13.5px;letter-spacing:-0.1px;color:#3a3a3a">2024-05-24 16:39</div>
<div class="c" style="left:449px;top:271px;text-align:left;font-size:13.5px;color:#1787cb">CW2405240001</div>
<div class="c" style="left:559px;top:271px;text-align:left;">支出</div>
<div class="c" style="left:535.5px;top:271px;width:200px;font-size:12.5px;color:#3a3a3a">1000.00</div>
<div class="c" style="left:802.5px;top:271px;width:200px;">工程收支2</div>
<div class="c" style="left:882.0px;top:271px;width:200px;">员工工资</div>
<div class="c" style="left:952.5px;top:271px;width:200px;">刘大同董</div>
<div class="c" style="left:1012.0px;top:271px;width:200px;">刘大同董</div>
<div class="c" style="left:1132.0px;top:271px;width:200px;">瑞祥装饰</div>
<div class="c" style="left:1266px;top:271px;text-align:left;">一个客户</div>
<div class="c" style="left:1297.0px;top:271px;width:200px;">竣工客户</div>
<div class="c" style="left:1382.0px;top:271px;width:200px;font-size:12.5px">P2302080011</div>
<div class="c" style="left:1606px;top:271px;text-align:left;">北京</div>
<div class="c" style="left:-87.0px;top:304px;width:200px;font-size:13px">9</div>
<div class="cb" style="left:34px;top:305px"></div>
<div class="c lk" style="left:60px;top:304px;text-align:left;font-size:13px;letter-spacing:0.33px">[打印] [删] [改]</div>
<div class="c" style="left:166.0px;top:304px;width:200px;font-size:13.5px;letter-spacing:-0.1px;color:#3a3a3a">2024-04-29 10:04</div>
<div class="c" style="left:286.0px;top:304px;width:200px;font-size:13.5px;letter-spacing:-0.1px;color:#3a3a3a">2024-04-29 10:05</div>
<div class="c" style="left:449px;top:304px;text-align:left;font-size:13.5px;color:#1787cb">CW2404290001</div>
<div class="c" style="left:559px;top:304px;text-align:left;">支出</div>
<div class="c" style="left:535.5px;top:304px;width:200px;font-size:12.5px;color:#3a3a3a">38.22</div>
<div class="c" style="left:802.5px;top:304px;width:200px;">工程收支2</div>
<div class="c" style="left:882.0px;top:304px;width:200px;">供应商款项</div>
<div class="c" style="left:952.5px;top:304px;width:200px;">刘大同董</div>
<div class="c" style="left:1012.0px;top:304px;width:200px;">01130木</div>
<div class="c" style="left:1072.0px;top:304px;width:200px;">蔡全</div>
<div class="c" style="left:1132.0px;top:304px;width:200px;">李明（业</div>
<div class="c" style="left:1382.0px;top:304px;width:200px;font-size:12.5px">P1804140001</div>
<div class="c" style="left:1606px;top:304px;text-align:left;">武侯</div>
<div class="c" style="left:-87.0px;top:337px;width:200px;font-size:13px">10</div>
<div class="cb" style="left:34px;top:338px"></div>
<div class="c lk" style="left:60px;top:337px;text-align:left;font-size:13px;letter-spacing:0.33px">[打印] [删] [改]</div>
<div class="c" style="left:166.0px;top:337px;width:200px;font-size:13.5px;letter-spacing:-0.1px;color:#3a3a3a">2024-01-27 16:27</div>
<div class="c" style="left:286.0px;top:337px;width:200px;font-size:13.5px;letter-spacing:-0.1px;color:#3a3a3a">2024-01-27 16:28</div>
<div class="c" style="left:449px;top:337px;text-align:left;font-size:13.5px;color:#1787cb">CW2401270001</div>
<div class="c" style="left:559px;top:337px;text-align:left;">支出</div>
<div class="c" style="left:535.5px;top:337px;width:200px;font-size:12.5px;color:#3a3a3a">2000.00</div>
<div class="c" style="left:802.5px;top:337px;width:200px;">费用支出</div>
<div class="c" style="left:882.0px;top:337px;width:200px;">员工工资</div>
<div class="c" style="left:952.5px;top:337px;width:200px;">刘大同董</div>
<div class="c" style="left:1012.0px;top:337px;width:200px;">刘大同董</div>
<div class="c" style="left:1072.0px;top:337px;width:200px;">刘大陆</div>
<div class="c" style="left:1132.0px;top:337px;width:200px;">管理员</div>
<div class="c" style="left:1266px;top:337px;text-align:left;">中心二期</div>
<div class="c" style="left:1297.0px;top:337px;width:200px;">材料销售</div>
<div class="c" style="left:1382.0px;top:337px;width:200px;font-size:12.5px">P1612230003</div>
<div class="c" style="left:1606px;top:337px;text-align:left;">中心</div>
<div class="c" style="left:-87.0px;top:370px;width:200px;font-size:13px">11</div>
<div class="cb" style="left:34px;top:371px"></div>
<div class="c lk" style="left:60px;top:370px;text-align:left;font-size:13px;letter-spacing:0.33px">[打印] [删] [改]</div>
<div class="c" style="left:166.0px;top:370px;width:200px;font-size:13.5px;letter-spacing:-0.1px;color:#3a3a3a">2023-12-23 17:52</div>
<div class="c" style="left:286.0px;top:370px;width:200px;font-size:13.5px;letter-spacing:-0.1px;color:#3a3a3a">2023-12-23 17:53</div>
<div class="c" style="left:449px;top:370px;text-align:left;font-size:13.5px;color:#1787cb">CW2312230003</div>
<div class="c" style="left:559px;top:370px;text-align:left;">支出</div>
<div class="c" style="left:535.5px;top:370px;width:200px;font-size:12.5px;color:#3a3a3a">36.44</div>
<div class="c" style="left:802.5px;top:370px;width:200px;">费用支出</div>
<div class="c" style="left:882.0px;top:370px;width:200px;">材料商款</div>
<div class="c" style="left:952.5px;top:370px;width:200px;">刘大同董</div>
<div class="c" style="left:1012.0px;top:370px;width:200px;">01130木</div>
<div class="c" style="left:1072.0px;top:370px;width:200px;">蔡全</div>
<div class="c" style="left:1132.0px;top:370px;width:200px;">李明（业</div>
<div class="c" style="left:1382.0px;top:370px;width:200px;font-size:12.5px">P1804140001</div>
<div class="c" style="left:1606px;top:370px;text-align:left;">武侯</div>
<div class="c" style="left:-87.0px;top:403px;width:200px;font-size:13px">12</div>
<div class="cb" style="left:34px;top:404px"></div>
<div class="c lk" style="left:60px;top:403px;text-align:left;font-size:13px;letter-spacing:0.33px">[打印] [删] [改]</div>
<div class="c" style="left:166.0px;top:403px;width:200px;font-size:13.5px;letter-spacing:-0.1px;color:#3a3a3a">2023-12-23 17:45</div>
<div class="c" style="left:286.0px;top:403px;width:200px;font-size:13.5px;letter-spacing:-0.1px;color:#3a3a3a">2023-12-23 17:46</div>
<div class="c" style="left:449px;top:403px;text-align:left;font-size:13.5px;color:#1787cb">CW2312230001</div>
<div class="c" style="left:559px;top:403px;text-align:left;">收入</div>
<div class="c" style="left:535.5px;top:403px;width:200px;font-size:12.5px;color:#3a3a3a">40000.00</div>
<div class="c" style="left:604.0px;top:403px;width:200px;font-size:12.5px;color:#3a3a3a">0.00</div>
<div class="c" style="left:664.0px;top:403px;width:200px;font-size:12.5px;color:#3a3a3a">0.00</div>
<div class="c" style="left:724.0px;top:403px;width:200px;font-size:12.5px;color:#3a3a3a">40000.00</div>
<div class="c" style="left:802.5px;top:403px;width:200px;">工程收支1</div>
<div class="c" style="left:882.0px;top:403px;width:200px;">测试2212</div>
<div class="c" style="left:952.5px;top:403px;width:200px;">刘大同董</div>
<div class="c" style="left:1132.0px;top:403px;width:200px;">刘大同董</div>
<div class="c" style="left:1266px;top:403px;text-align:left;">测试1117</div>
<div class="c" style="left:1297.0px;top:403px;width:200px;">D类客户</div>
<div class="c" style="left:1382.0px;top:403px;width:200px;font-size:12.5px">P2312050002</div>
<div class="c" style="left:1606px;top:403px;text-align:left;">测试</div>
<div class="c" style="left:-87.0px;top:436px;width:200px;font-size:13px">13</div>
<div class="cb" style="left:34px;top:437px"></div>
<div class="c lk" style="left:60px;top:436px;text-align:left;font-size:13px;letter-spacing:0.33px">[打印] [删] [改]</div>
<div class="c" style="left:166.0px;top:436px;width:200px;font-size:13.5px;letter-spacing:-0.1px;color:#3a3a3a">2023-12-05 11:29</div>
<div class="c" style="left:286.0px;top:436px;width:200px;font-size:13.5px;letter-spacing:-0.1px;color:#3a3a3a">2023-12-10 18:57</div>
<div class="c" style="left:449px;top:436px;text-align:left;font-size:13.5px;color:#1787cb">CW2312100001</div>
<div class="c" style="left:559px;top:436px;text-align:left;">收入</div>
<div class="c" style="left:535.5px;top:436px;width:200px;font-size:12.5px;color:#3a3a3a">40000.00</div>
<div class="c" style="left:604.0px;top:436px;width:200px;font-size:12.5px;color:#3a3a3a">0.00</div>
<div class="c" style="left:664.0px;top:436px;width:200px;font-size:12.5px;color:#3a3a3a">0.00</div>
<div class="c" style="left:724.0px;top:436px;width:200px;font-size:12.5px;color:#3a3a3a">40000.00</div>
<div class="c" style="left:802.5px;top:436px;width:200px;">公司费用1</div>
<div class="c" style="left:882.0px;top:436px;width:200px;">宏浪卫浴</div>
<div class="c" style="left:952.5px;top:436px;width:200px;">刘大同董</div>
<div class="c" style="left:1072.0px;top:436px;width:200px;">思飞装饰</div>
<div class="c" style="left:1132.0px;top:436px;width:200px;">刘大同董</div>
<div class="c" style="left:1266px;top:436px;text-align:left;">1205测试</div>
<div class="c" style="left:1297.0px;top:436px;width:200px;">D类客户</div>
<div class="c" style="left:1382.0px;top:436px;width:200px;font-size:12.5px">P2312050005</div>
<div class="c" style="left:1606px;top:436px;text-align:left;">120</div>
<div class="c" style="left:-87.0px;top:469px;width:200px;font-size:13px">14</div>
<div class="cb" style="left:34px;top:470px"></div>
<div class="c lk" style="left:60px;top:469px;text-align:left;font-size:13px;letter-spacing:0.33px">[打印] [删] [改]</div>
<div class="c" style="left:166.0px;top:469px;width:200px;font-size:13.5px;letter-spacing:-0.1px;color:#3a3a3a">2023-11-09 11:40</div>
<div class="c" style="left:286.0px;top:469px;width:200px;font-size:13.5px;letter-spacing:-0.1px;color:#3a3a3a">2023-11-09 11:40</div>
<div class="c" style="left:449px;top:469px;text-align:left;font-size:13.5px;color:#1787cb">CW2311090001</div>
<div class="c" style="left:559px;top:469px;text-align:left;">收入</div>
<div class="c" style="left:535.5px;top:469px;width:200px;font-size:12.5px;color:#3a3a3a">-1.00</div>
<div class="c" style="left:604.0px;top:469px;width:200px;font-size:12.5px;color:#3a3a3a">0.00</div>
<div class="c" style="left:664.0px;top:469px;width:200px;font-size:12.5px;color:#3a3a3a">0.00</div>
<div class="c" style="left:724.0px;top:469px;width:200px;font-size:12.5px;color:#3a3a3a">-1.00</div>
<div class="c" style="left:802.5px;top:469px;width:200px;">费用支出</div>
<div class="c" style="left:882.0px;top:469px;width:200px;">合同收入</div>
<div class="c" style="left:952.5px;top:469px;width:200px;">刘大同董</div>
<div class="c" style="left:1132.0px;top:469px;width:200px;">业务员岗</div>
<div class="c" style="left:1266px;top:469px;text-align:left;">22222</div>
<div class="c" style="left:1297.0px;top:469px;width:200px;">材料销售</div>
<div class="c" style="left:1382.0px;top:469px;width:200px;font-size:12.5px">P2004300002</div>
<div class="c" style="left:1606px;top:469px;text-align:left;">www</div>
<div class="c" style="left:-87.0px;top:502px;width:200px;font-size:13px">15</div>
<div class="cb" style="left:34px;top:503px"></div>
<div class="c lk" style="left:60px;top:502px;text-align:left;font-size:13px;letter-spacing:0.33px">[打印] [删] [改]</div>
<div class="c" style="left:166.0px;top:502px;width:200px;font-size:13.5px;letter-spacing:-0.1px;color:#3a3a3a">2023-10-18 10:22</div>
<div class="c" style="left:286.0px;top:502px;width:200px;font-size:13.5px;letter-spacing:-0.1px;color:#3a3a3a">2023-10-18 10:23</div>
<div class="c" style="left:449px;top:502px;text-align:left;font-size:13.5px;color:#1787cb">CW2310180001</div>
<div class="c" style="left:559px;top:502px;text-align:left;">收入</div>
<div class="c" style="left:535.5px;top:502px;width:200px;font-size:12.5px;color:#3a3a3a">1.00</div>
<div class="c" style="left:604.0px;top:502px;width:200px;font-size:12.5px;color:#3a3a3a">0.00</div>
<div class="c" style="left:664.0px;top:502px;width:200px;font-size:12.5px;color:#3a3a3a">0.00</div>
<div class="c" style="left:724.0px;top:502px;width:200px;font-size:12.5px;color:#3a3a3a">1.00</div>
<div class="c" style="left:802.5px;top:502px;width:200px;">工程收支1</div>
<div class="c" style="left:882.0px;top:502px;width:200px;">工程款</div>
<div class="c" style="left:952.5px;top:502px;width:200px;">刘大同董</div>
<div class="c" style="left:1132.0px;top:502px;width:200px;">优途</div>
<div class="c" style="left:1266px;top:502px;text-align:left;">111</div>
<div class="c" style="left:1297.0px;top:502px;width:200px;">D类客户</div>
<div class="c" style="left:1382.0px;top:502px;width:200px;font-size:12.5px">P2212070002</div>
<div class="c" style="left:1606px;top:502px;text-align:left;">111</div>
<div class="c" style="left:-87.0px;top:535px;width:200px;font-size:13px">16</div>
<div class="cb" style="left:34px;top:536px"></div>
<div class="c lk" style="left:60px;top:535px;text-align:left;font-size:13px;letter-spacing:0.33px">[打印] [删] [改]</div>
<div class="c" style="left:166.0px;top:535px;width:200px;font-size:13.5px;letter-spacing:-0.1px;color:#3a3a3a">2023-09-15 14:16</div>
<div class="c" style="left:286.0px;top:535px;width:200px;font-size:13.5px;letter-spacing:-0.1px;color:#3a3a3a">2023-09-15 14:16</div>
<div class="c" style="left:449px;top:535px;text-align:left;font-size:13.5px;color:#1787cb">CW2309150002</div>
<div class="c" style="left:559px;top:535px;text-align:left;">支出</div>
<div class="c" style="left:535.5px;top:535px;width:200px;font-size:12.5px;color:#3a3a3a">8000.00</div>
<div class="c" style="left:802.5px;top:535px;width:200px;">费用支出</div>
<div class="c" style="left:882.0px;top:535px;width:200px;">项目成本</div>
<div class="c" style="left:952.5px;top:535px;width:200px;">刘大同董</div>
<div class="c" style="left:1012.0px;top:535px;width:200px;">李忠友个</div>
<div class="c" style="left:1132.0px;top:535px;width:200px;">经销商2</div>
<div class="c" style="left:1266px;top:535px;text-align:left;">贝诺斯</div>
<div class="c" style="left:1297.0px;top:535px;width:200px;">材料销售</div>
<div class="c" style="left:1382.0px;top:535px;width:200px;font-size:12.5px">P2309150002</div>
<div class="c" style="left:1606px;top:535px;text-align:left;">测试</div>
<div class="hd">
<div class="hb" style="left:26px"></div>
<div class="hb" style="left:56px"></div>
<div class="hb" style="left:207px"></div>
<div class="hb" style="left:328px"></div>
<div class="hb" style="left:448px"></div>
<div class="hb" style="left:560px"></div>
<div class="hb" style="left:611px"></div>
<div class="hb" style="left:672px"></div>
<div class="hb" style="left:733px"></div>
<div class="hb" style="left:794px"></div>
<div class="hb" style="left:855px"></div>
<div class="hb" style="left:937px"></div>
<div class="hb" style="left:1017px"></div>
<div class="hb" style="left:1079px"></div>
<div class="hb" style="left:1139px"></div>
<div class="hb" style="left:1200px"></div>
<div class="hb" style="left:1261px"></div>
<div class="hb" style="left:1362px"></div>
<div class="hb" style="left:1433px"></div>
<div class="hb" style="left:1535px"></div>
<div class="hb" style="left:1606px"></div>
<div class="ht" style="left:208px;width:120px">发生时间</div>
<div class="ht" style="left:329px;width:119px">记账时间</div>
<div class="ht" style="left:449px;width:111px">单据号</div>
<div class="ht" style="left:561px;width:50px">类型</div>
<div class="ht" style="left:612px;width:60px">金额</div>
<div class="ht" style="left:673px;width:60px">定金抵扣</div>
<div class="ht" style="left:734px;width:60px">手续费</div>
<div class="ht" style="left:795px;width:60px">入账金额</div>
<div class="ht" style="left:856px;width:81px">账户</div>
<div class="ht" style="left:938px;width:79px">分类</div>
<div class="ht" style="left:1018px;width:61px">经办人</div>
<div class="ht" style="left:1080px;width:59px">领款人</div>
<div class="ht" style="left:1140px;width:60px">项目经理</div>
<div class="ht" style="left:1201px;width:60px">业务员</div>
<div class="ht" style="left:1262px;width:100px">客户名称</div>
<div class="ht" style="left:1363px;width:70px">客户分类</div>
<div class="ht" style="left:1434px;width:101px">工程编号</div>
<div class="ht" style="left:1536px;width:70px">成本结余</div>
<div class="cb" style="left:34px;top:10px"></div>
</div>
<div class="abs" style="left:1623px;top:30px;width:14px;height:527px;background:#f1f1f1"></div>
<svg class="abs" style="left:1626px;top:36px" width="9" height="6" viewBox="0 0 9 6"><path d="M0.5 5.5 L4.5 1 L8.5 5.5Z" fill="#a3a3a3"/></svg>
<div class="abs" style="left:1624px;top:48px;width:13px;height:115px;background:#c1c1c1"></div>
<svg class="abs" style="left:1627px;top:545px" width="9" height="6" viewBox="0 0 9 6"><path d="M0.5 0.5 L4.5 5 L8.5 0.5Z" fill="#505050"/></svg>
<div class="abs" style="left:1623px;top:557px;width:14px;height:15px;background:#dcdcdc"></div>
<div class="abs" style="left:56px;top:557px;width:1567px;height:15px;background:#f1f1f1"></div>
<div class="abs" style="left:0;top:557px;width:56px;height:15px;background:#fff"></div>
<svg class="abs" style="left:62px;top:560px" width="6" height="9" viewBox="0 0 6 9"><path d="M5.5 0.5 L1 4.5 L5.5 8.5Z" fill="#a3a3a3"/></svg>
<div class="abs" style="left:74px;top:558px;width:1274px;height:13px;background:#c1c1c1"></div>
<svg class="abs" style="left:1612px;top:560px" width="6" height="9" viewBox="0 0 6 9"><path d="M0.5 0.5 L5 4.5 L0.5 8.5Z" fill="#505050"/></svg>
</div>
</body></html>
